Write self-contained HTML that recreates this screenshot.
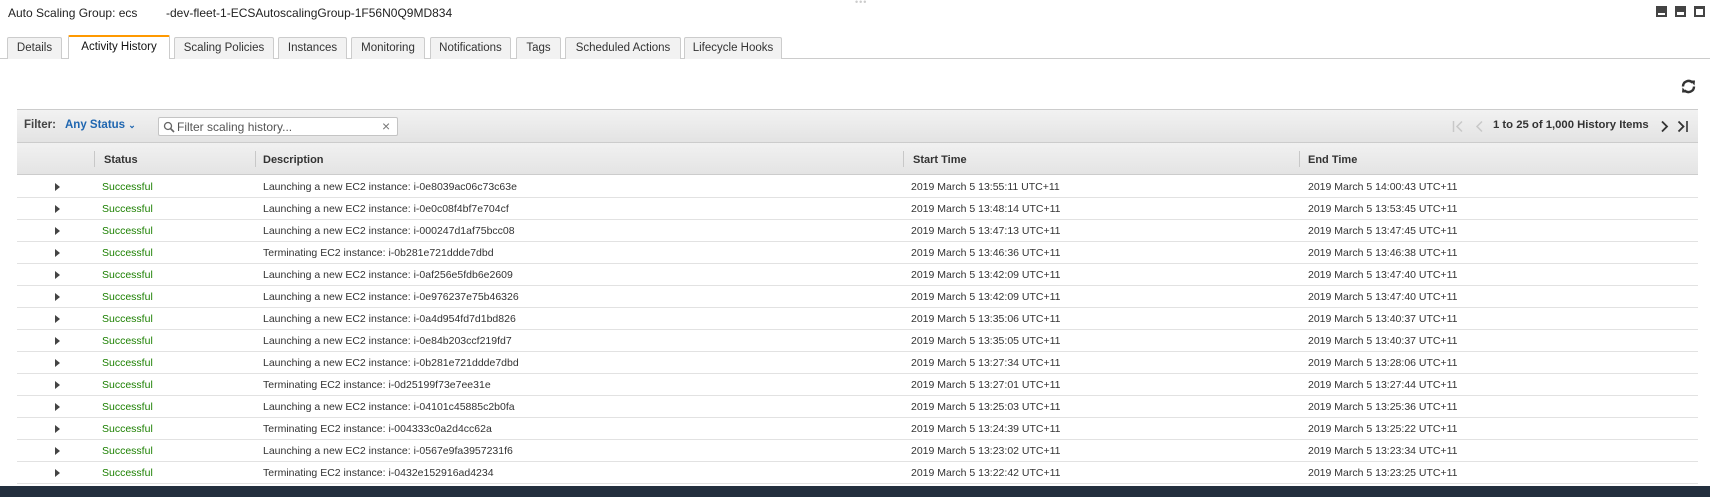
<!DOCTYPE html>
<html><head><meta charset="utf-8"><style>
*{margin:0;padding:0;box-sizing:border-box}
body{width:1710px;height:497px;background:#fff;font-family:"Liberation Sans",Arial,sans-serif;color:#333;position:relative;overflow:hidden}
.a{position:absolute;white-space:nowrap}
.title{top:6px;font-size:12px;color:#222}
.tab{position:absolute;top:37px;height:22px;border:1px solid #ccc;border-bottom:none;background:#f2f2f2;font-size:11.5px;color:#333;text-align:center;line-height:20px;border-radius:2px 2px 0 0}
.tab.act{top:35px;height:24px;background:#fff;border-top:2px solid #f90;color:#111;line-height:21px;z-index:2}
.wi{position:absolute;top:6px;width:11px;height:11px;background:#444}
.wi i{position:absolute;left:2px;right:2px;bottom:2px;background:#fff}
.fb{position:absolute;left:17px;top:109px;width:1681px;height:34px;background:linear-gradient(#f2f2f2,#e3e3e3);border-top:1px solid #ccc;border-bottom:1px solid #ccc}
.hd{position:absolute;left:17px;top:143px;width:1681px;height:32px;background:linear-gradient(#f1f1f1,#e4e4e4);border-bottom:1px solid #ccc;font-size:11px;font-weight:bold;color:#333}
.sep{position:absolute;top:8px;height:16px;border-left:1px solid #c8c8c8}
.row{position:absolute;left:17px;width:1681px;height:22px;border-bottom:1px solid #e2e2e2;font-size:10.5px;color:#333}
.row span{position:absolute;top:5px;white-space:nowrap}
.ok{color:#1d8102}
.tri{position:absolute;left:38px;top:7px;width:0;height:0;border-left:5px solid #444;border-top:4px solid transparent;border-bottom:4px solid transparent}
</style></head><body>
<div class="a title" style="left:8px">Auto Scaling Group: ecs</div>
<div class="a title" style="left:166px">-dev-fleet-1-ECSAutoscalingGroup-1F56N0Q9MD834</div>
<div class="a" style="left:855px;top:-3px;font-size:9px;color:#ccc;letter-spacing:1px">•••</div>
<div class="wi" style="left:1656px"><i style="height:2px"></i></div>
<div class="wi" style="left:1675px"><i style="height:3px"></i></div>
<div class="wi" style="left:1694px"><i style="height:6px"></i></div>
<div class="a" style="left:0;top:58px;width:1710px;border-top:1px solid #ccc"></div>
<div class="tab" style="left:7px;width:55px">Details</div>
<div class="tab act" style="left:68px;width:102px">Activity History</div>
<div class="tab" style="left:174px;width:100px">Scaling Policies</div>
<div class="tab" style="left:278px;width:69px">Instances</div>
<div class="tab" style="left:351px;width:74px">Monitoring</div>
<div class="tab" style="left:430px;width:81px">Notifications</div>
<div class="tab" style="left:516px;width:45px">Tags</div>
<div class="tab" style="left:565px;width:116px">Scheduled Actions</div>
<div class="tab" style="left:684px;width:98px">Lifecycle Hooks</div>
<svg class="a" style="left:1680px;top:78px" width="17" height="17" viewBox="0 0 17 17"><path d="M3 8.5a5.5 5.5 0 0 1 9.5-3.8" fill="none" stroke="#333" stroke-width="2.4"/><path d="M10 2.5l5 0-0.5 5z" fill="#333"/><path d="M14 8.5a5.5 5.5 0 0 1-9.5 3.8" fill="none" stroke="#333" stroke-width="2.4"/><path d="M7 14.5l-5 0 0.5-5z" fill="#333"/></svg>
<div class="fb">
<div class="a" style="left:7px;top:9px;font-size:11.5px;font-weight:bold;color:#444">Filter:</div>
<div class="a" style="left:48px;top:9px;font-size:11.5px;font-weight:bold;color:#1f66b0">Any Status <span style="font-size:9px">&#8964;</span></div>
<div class="a" style="left:141px;top:7px;width:240px;height:19px;background:#fff;border:1px solid #c4c4c4;border-radius:2px">
<svg class="a" style="left:4px;top:3px" width="12" height="12" viewBox="0 0 12 12"><circle cx="5" cy="5" r="3.5" fill="none" stroke="#666" stroke-width="1.3"/><path d="M7.5 7.5L11 11" stroke="#666" stroke-width="1.6"/></svg>
<div class="a" style="left:18px;top:2px;font-size:12px;color:#555">Filter scaling history...</div>
<div class="a" style="left:223px;top:0px;font-size:14px;color:#777">&#215;</div>
</div>
<svg class="a" style="left:1435px;top:10px" width="12" height="13" viewBox="0 0 12 13"><path d="M1.5 1v11" stroke="#c8c8c8" stroke-width="1.5"/><path d="M10 1.5L5 6.5l5 5" fill="none" stroke="#c8c8c8" stroke-width="1.5"/></svg>
<svg class="a" style="left:1457px;top:10px" width="10" height="13" viewBox="0 0 10 13"><path d="M8 1.5L3 6.5l5 5" fill="none" stroke="#c8c8c8" stroke-width="1.5"/></svg>
<div class="a" style="left:1476px;top:9px;font-size:11.3px;font-weight:bold;color:#333">1 to 25 of 1,000 History Items</div>
<svg class="a" style="left:1643px;top:10px" width="10" height="13" viewBox="0 0 10 13"><path d="M2 1.5l5 5-5 5" fill="none" stroke="#333" stroke-width="1.8"/></svg>
<svg class="a" style="left:1660px;top:10px" width="12" height="13" viewBox="0 0 12 13"><path d="M1.5 1.5l5 5-5 5" fill="none" stroke="#333" stroke-width="1.8"/><path d="M10 1v11" stroke="#333" stroke-width="1.6"/></svg>
</div>
<div class="hd">
<div class="sep" style="left:77px"></div><div class="sep" style="left:238px"></div><div class="sep" style="left:886px"></div><div class="sep" style="left:1282px"></div>
<div class="a" style="left:87px;top:11px">Status</div>
<div class="a" style="left:246px;top:11px">Description</div>
<div class="a" style="left:896px;top:11px">Start Time</div>
<div class="a" style="left:1291px;top:11px">End Time</div>
</div>
<div class="row" style="top:176px"><i class="tri"></i><span class="ok" style="left:85px">Successful</span><span style="left:246px">Launching a new EC2 instance: i-0e8039ac06c73c63e</span><span style="left:894px">2019 March 5 13:55:11 UTC+11</span><span style="left:1291px">2019 March 5 14:00:43 UTC+11</span></div>
<div class="row" style="top:198px"><i class="tri"></i><span class="ok" style="left:85px">Successful</span><span style="left:246px">Launching a new EC2 instance: i-0e0c08f4bf7e704cf</span><span style="left:894px">2019 March 5 13:48:14 UTC+11</span><span style="left:1291px">2019 March 5 13:53:45 UTC+11</span></div>
<div class="row" style="top:220px"><i class="tri"></i><span class="ok" style="left:85px">Successful</span><span style="left:246px">Launching a new EC2 instance: i-000247d1af75bcc08</span><span style="left:894px">2019 March 5 13:47:13 UTC+11</span><span style="left:1291px">2019 March 5 13:47:45 UTC+11</span></div>
<div class="row" style="top:242px"><i class="tri"></i><span class="ok" style="left:85px">Successful</span><span style="left:246px">Terminating EC2 instance: i-0b281e721ddde7dbd</span><span style="left:894px">2019 March 5 13:46:36 UTC+11</span><span style="left:1291px">2019 March 5 13:46:38 UTC+11</span></div>
<div class="row" style="top:264px"><i class="tri"></i><span class="ok" style="left:85px">Successful</span><span style="left:246px">Launching a new EC2 instance: i-0af256e5fdb6e2609</span><span style="left:894px">2019 March 5 13:42:09 UTC+11</span><span style="left:1291px">2019 March 5 13:47:40 UTC+11</span></div>
<div class="row" style="top:286px"><i class="tri"></i><span class="ok" style="left:85px">Successful</span><span style="left:246px">Launching a new EC2 instance: i-0e976237e75b46326</span><span style="left:894px">2019 March 5 13:42:09 UTC+11</span><span style="left:1291px">2019 March 5 13:47:40 UTC+11</span></div>
<div class="row" style="top:308px"><i class="tri"></i><span class="ok" style="left:85px">Successful</span><span style="left:246px">Launching a new EC2 instance: i-0a4d954fd7d1bd826</span><span style="left:894px">2019 March 5 13:35:06 UTC+11</span><span style="left:1291px">2019 March 5 13:40:37 UTC+11</span></div>
<div class="row" style="top:330px"><i class="tri"></i><span class="ok" style="left:85px">Successful</span><span style="left:246px">Launching a new EC2 instance: i-0e84b203ccf219fd7</span><span style="left:894px">2019 March 5 13:35:05 UTC+11</span><span style="left:1291px">2019 March 5 13:40:37 UTC+11</span></div>
<div class="row" style="top:352px"><i class="tri"></i><span class="ok" style="left:85px">Successful</span><span style="left:246px">Launching a new EC2 instance: i-0b281e721ddde7dbd</span><span style="left:894px">2019 March 5 13:27:34 UTC+11</span><span style="left:1291px">2019 March 5 13:28:06 UTC+11</span></div>
<div class="row" style="top:374px"><i class="tri"></i><span class="ok" style="left:85px">Successful</span><span style="left:246px">Terminating EC2 instance: i-0d25199f73e7ee31e</span><span style="left:894px">2019 March 5 13:27:01 UTC+11</span><span style="left:1291px">2019 March 5 13:27:44 UTC+11</span></div>
<div class="row" style="top:396px"><i class="tri"></i><span class="ok" style="left:85px">Successful</span><span style="left:246px">Launching a new EC2 instance: i-04101c45885c2b0fa</span><span style="left:894px">2019 March 5 13:25:03 UTC+11</span><span style="left:1291px">2019 March 5 13:25:36 UTC+11</span></div>
<div class="row" style="top:418px"><i class="tri"></i><span class="ok" style="left:85px">Successful</span><span style="left:246px">Terminating EC2 instance: i-004333c0a2d4cc62a</span><span style="left:894px">2019 March 5 13:24:39 UTC+11</span><span style="left:1291px">2019 March 5 13:25:22 UTC+11</span></div>
<div class="row" style="top:440px"><i class="tri"></i><span class="ok" style="left:85px">Successful</span><span style="left:246px">Launching a new EC2 instance: i-0567e9fa3957231f6</span><span style="left:894px">2019 March 5 13:23:02 UTC+11</span><span style="left:1291px">2019 March 5 13:23:34 UTC+11</span></div>
<div class="row" style="top:462px"><i class="tri"></i><span class="ok" style="left:85px">Successful</span><span style="left:246px">Terminating EC2 instance: i-0432e152916ad4234</span><span style="left:894px">2019 March 5 13:22:42 UTC+11</span><span style="left:1291px">2019 March 5 13:23:25 UTC+11</span></div>
<div class="a" style="left:0;top:486px;width:1710px;height:11px;background:#232f3e"></div>
</body></html>
